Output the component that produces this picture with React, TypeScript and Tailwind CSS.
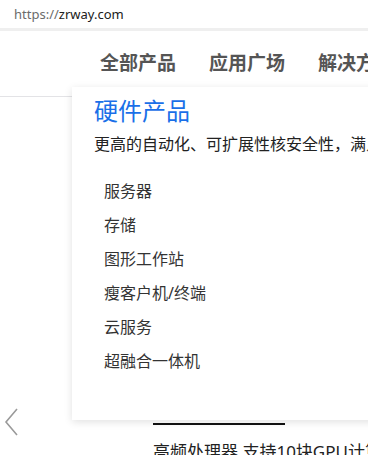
import React from "react";

const font = { fontFamily: '"Noto Sans", "Noto Sans CJK SC", sans-serif' };

export default function App() {
  const items = ["服务器", "存储", "图形工作站", "瘦客户机/终端", "云服务", "超融合一体机"];
  return (
    <div className="relative w-[368px] h-[455px] overflow-hidden bg-white" style={font}>
      {/* address bar */}
      <div className="h-[28px] flex items-center pl-[14px] text-[13px] leading-none">
        <span className="text-[#6b6b6b]">https://</span>
        <span className="text-[#202020]">zrway.com</span>
      </div>
      <div className="h-[3px] bg-[#efefef]" />

      {/* header nav */}
      <div className="h-[65px] flex items-center pl-[100px] gap-[33px] whitespace-nowrap">
        <span className="text-[19px] font-bold text-[#555]">全部产品</span>
        <span className="text-[19px] font-bold text-[#555]">应用广场</span>
        <span className="text-[19px] font-bold text-[#555]">解决方案</span>
      </div>
      <div className="h-px bg-[#e3e3e6]" />

      {/* below content */}
      <div className="pl-[153px] pt-[326px]">
        <div className="w-[132px] h-[2px] bg-[#111]" />
        <div className="mt-[18px] text-[17px] text-[#222] whitespace-nowrap leading-none">高频处理器 支持10块GPU计算卡</div>
      </div>

      {/* left arrow */}
      <svg className="absolute left-[2px] top-[407px]" width="18" height="30" viewBox="0 0 18 30">
        <path d="M15 2 L4 15 L15 28" fill="none" stroke="#9a9a9a" strokeWidth="1.6" />
      </svg>

      {/* dropdown panel */}
      <div className="absolute left-[72px] top-[87px] w-[310px] h-[333px] bg-white shadow-[0_2px_8px_rgba(0,0,0,0.12)] pl-[22px] pt-[8px]">
        <div className="text-[24px] leading-[32px] text-[#1a6fe8] whitespace-nowrap">硬件产品</div>
        <div className="mt-[6px] text-[16px] leading-[22px] text-[#222] whitespace-nowrap">
          更高的自动化、可扩展性核安全性，满足各种业务需求
        </div>
        <div className="mt-[19px] pl-[10px] flex flex-col">
          {items.map((t) => (
            <div key={t} className="h-[34px] flex items-center text-[16px] text-[#333] whitespace-nowrap">
              {t}
            </div>
          ))}
        </div>
      </div>
    </div>
  );
}
